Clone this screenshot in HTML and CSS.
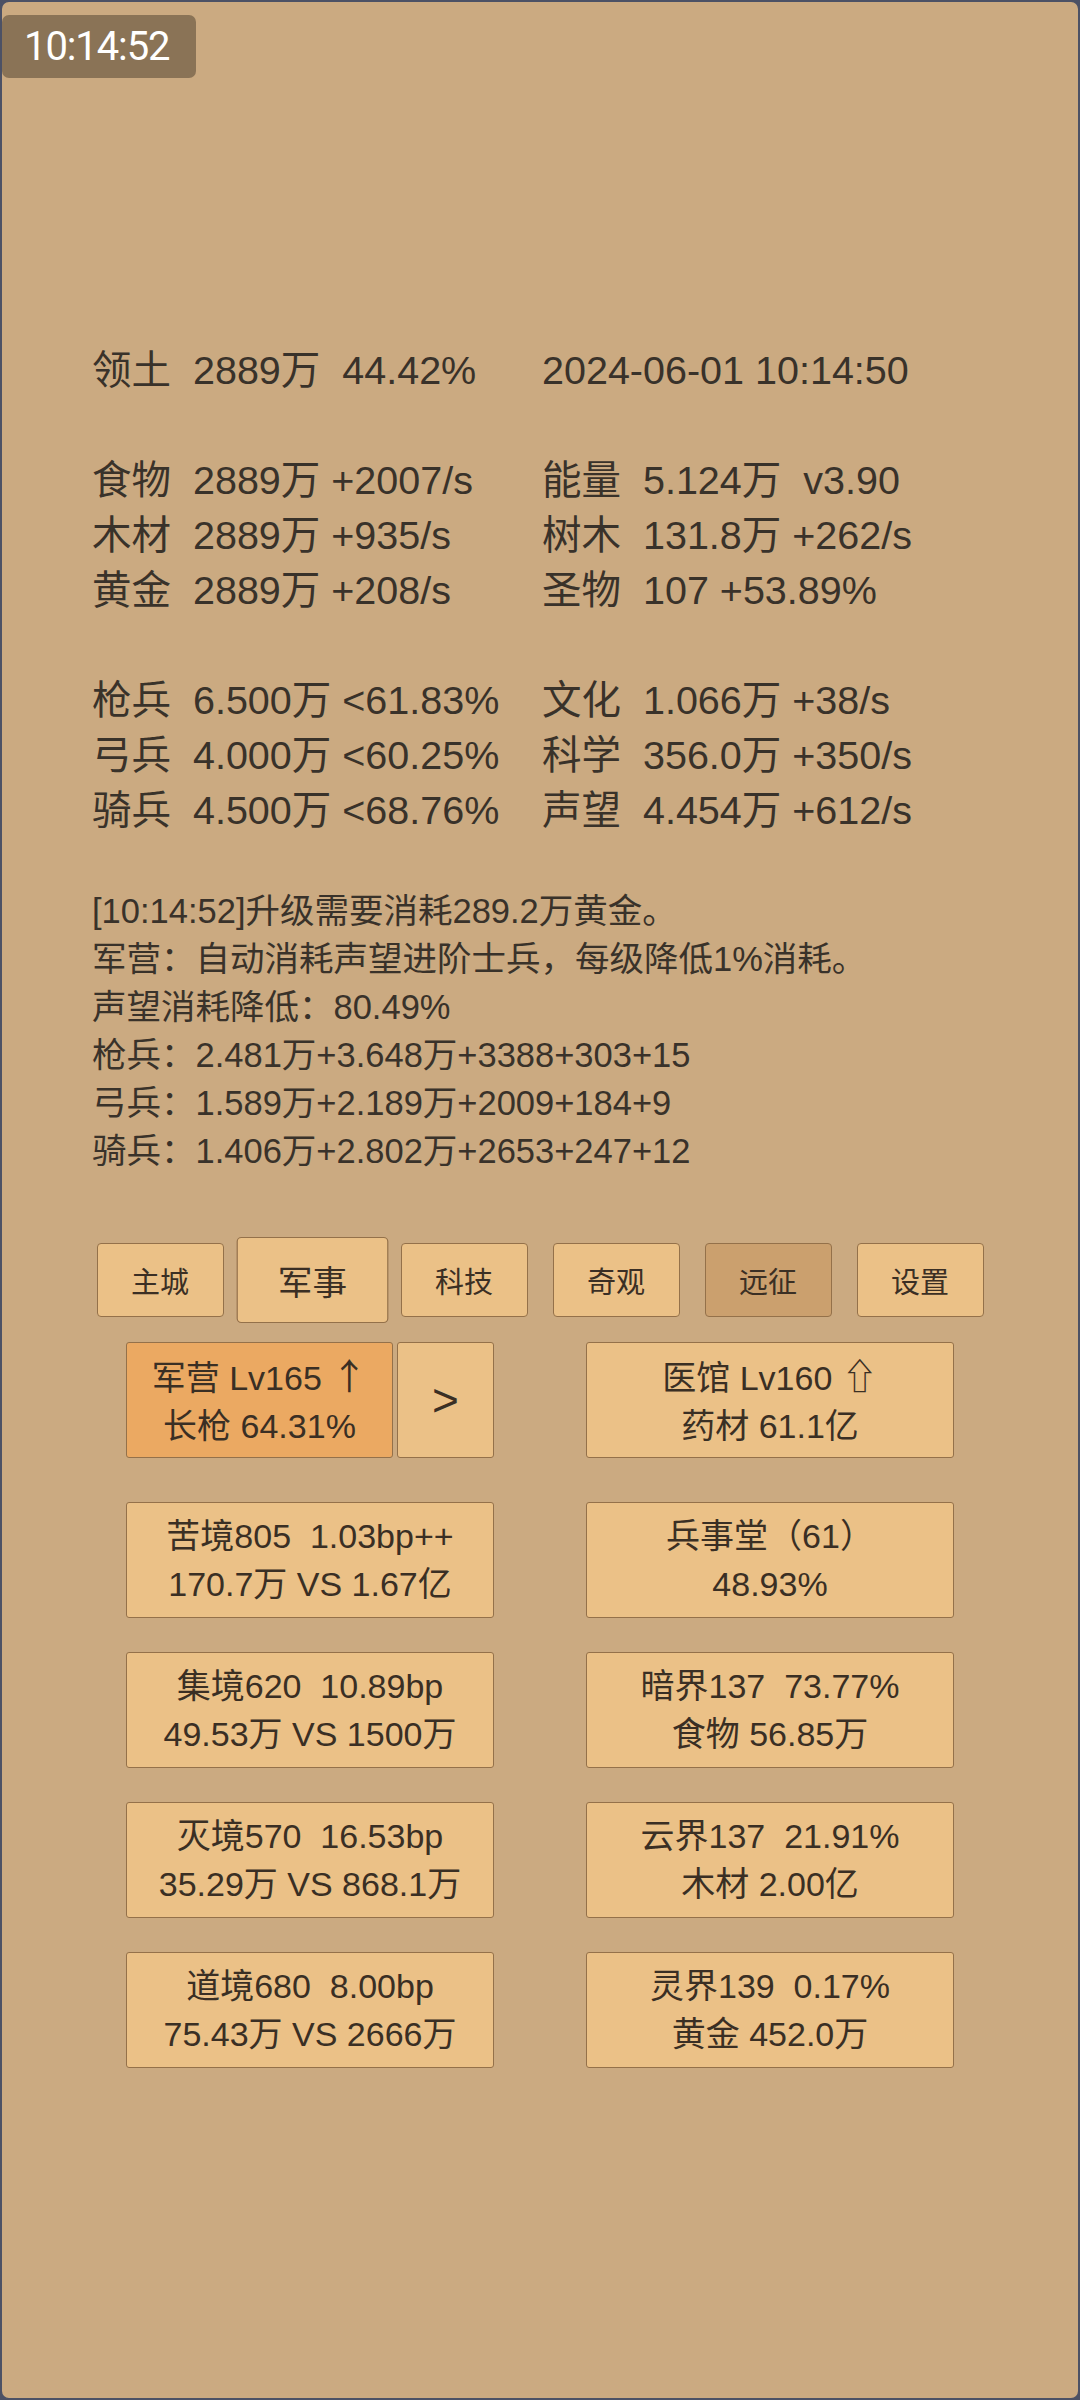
FILE: index.html
```html
<!DOCTYPE html>
<html lang="zh-CN">
<head>
<meta charset="utf-8">
<title>军事</title>
<link rel="stylesheet" href="styles.css">
</head>
<body>
<div class="screen">
  <div class="clock">10:14:52</div>

  <section class="stats">
    <div class="group">
      <div class="cell">领土  2889万  44.42%</div>
      <div class="cell">2024-06-01 10:14:50</div>
    </div>
    <div class="group">
      <div class="cell">食物  2889万 +2007/s</div>
      <div class="cell">能量  5.124万  v3.90</div>
      <div class="cell">木材  2889万 +935/s</div>
      <div class="cell">树木  131.8万 +262/s</div>
      <div class="cell">黄金  2889万 +208/s</div>
      <div class="cell">圣物  107 +53.89%</div>
    </div>
    <div class="group">
      <div class="cell">枪兵  6.500万 &lt;61.83%</div>
      <div class="cell">文化  1.066万 +38/s</div>
      <div class="cell">弓兵  4.000万 &lt;60.25%</div>
      <div class="cell">科学  356.0万 +350/s</div>
      <div class="cell">骑兵  4.500万 &lt;68.76%</div>
      <div class="cell">声望  4.454万 +612/s</div>
    </div>
  </section>

  <section class="log">
    <div class="log-line">[10:14:52]升级需要消耗289.2万黄金。</div>
    <div class="log-line">军营：自动消耗声望进阶士兵，每级降低1%消耗。</div>
    <div class="log-line">声望消耗降低：80.49%</div>
    <div class="log-line">枪兵：2.481万+3.648万+3388+303+15</div>
    <div class="log-line">弓兵：1.589万+2.189万+2009+184+9</div>
    <div class="log-line">骑兵：1.406万+2.802万+2653+247+12</div>
  </section>

  <nav class="tabs">
    <div class="tab">主城</div>
    <div class="tab tab-selected">军事</div>
    <div class="tab">科技</div>
    <div class="tab">奇观</div>
    <div class="tab tab-pressed">远征</div>
    <div class="tab">设置</div>
  </nav>

  <section class="cards">
    <div class="card-pair first-row">
      <div class="card card-active">
        <div class="card-line">军营 Lv165 <span class="arrow">↑</span></div>
        <div class="card-line">长枪 64.31%</div>
      </div>
      <div class="card card-arrow">&gt;</div>
    </div>
    <div class="card first-row">
      <div class="card-line">医馆 Lv160 <span class="arrow">⇧</span></div>
      <div class="card-line">药材 61.1亿</div>
    </div>

    <div class="card">
      <div class="card-line">苦境805  1.03bp++</div>
      <div class="card-line">170.7万 VS 1.67亿</div>
    </div>
    <div class="card">
      <div class="card-line">兵事堂（61）</div>
      <div class="card-line">48.93%</div>
    </div>

    <div class="card">
      <div class="card-line">集境620  10.89bp</div>
      <div class="card-line">49.53万 VS 1500万</div>
    </div>
    <div class="card">
      <div class="card-line">暗界137  73.77%</div>
      <div class="card-line">食物 56.85万</div>
    </div>

    <div class="card">
      <div class="card-line">灭境570  16.53bp</div>
      <div class="card-line">35.29万 VS 868.1万</div>
    </div>
    <div class="card">
      <div class="card-line">云界137  21.91%</div>
      <div class="card-line">木材 2.00亿</div>
    </div>

    <div class="card">
      <div class="card-line">道境680  8.00bp</div>
      <div class="card-line">75.43万 VS 2666万</div>
    </div>
    <div class="card">
      <div class="card-line">灵界139  0.17%</div>
      <div class="card-line">黄金 452.0万</div>
    </div>
  </section>
</div>
</body>
</html>
```

FILE: styles.css
```css
html, body {
  margin: 0;
  padding: 0;
  background: #4c5165;
}

body {
  width: 1080px;
  height: 2400px;
  font-family: "Liberation Sans", "Noto Sans CJK SC", sans-serif;
  color: #39322a;
}

.screen {
  box-sizing: border-box;
  width: 1080px;
  height: 2400px;
  border: 2px solid #4c5165;
  border-radius: 9px;
  background: #cbaa81;
  overflow: hidden;
}

.clock {
  margin-top: 13px;
  width: 194px;
  height: 63px;
  box-sizing: border-box;
  padding-left: 22px;
  background: #8a7356;
  border-radius: 7px;
  color: #ffffff;
  font-family: Roboto, "Liberation Sans", sans-serif;
  font-size: 40px;
  letter-spacing: -1.1px;
  line-height: 63px;
}

.stats {
  margin-top: 265px;
  padding-left: 90px;
  font-size: 39.5px;
  line-height: 55px;
}

.group {
  display: grid;
  grid-template-columns: 450px auto;
}

.group + .group {
  margin-top: 55px;
}

.cell {
  white-space: pre;
}

.log {
  margin-top: 49px;
  padding-left: 90px;
  font-size: 34.5px;
  line-height: 48px;
}

.log-line {
  white-space: pre;
}

.tabs {
  margin-top: 68px;
  display: flex;
  justify-content: center;
  gap: 25px;
}

.tab {
  box-sizing: border-box;
  width: 127px;
  height: 74px;
  display: flex;
  align-items: center;
  justify-content: center;
  background: #ebc187;
  border: 1px solid #94714a;
  border-radius: 4px;
  font-family: "Noto Sans CJK SC", sans-serif;
  font-size: 29px;
  color: #3b2f24;
}

.tab-selected {
  transform: scale(1.195, 1.165);
}

.tab-pressed {
  background: #cba06e;
}

.cards {
  margin-top: 25px;
  display: grid;
  grid-template-columns: 368px 368px;
  justify-content: center;
  column-gap: 92px;
  row-gap: 34px;
}

.first-row {
  margin-bottom: 10px;
}

.card-pair {
  display: flex;
  gap: 4px;
}

.card {
  box-sizing: border-box;
  height: 116px;
  display: flex;
  flex-direction: column;
  align-items: center;
  justify-content: center;
  background: #ebc187;
  border: 1px solid #94714a;
  border-radius: 3px;
  font-size: 34px;
  line-height: 48px;
  color: #3a2f24;
}

.card-line {
  white-space: pre;
}

.arrow {
  font-family: "Noto Sans CJK SC", sans-serif;
  font-size: 36px;
}

.card-active {
  width: 267px;
  background: #eba962;
}

.card-arrow {
  width: 97px;
  font-size: 46px;
  line-height: 1;
}
```
